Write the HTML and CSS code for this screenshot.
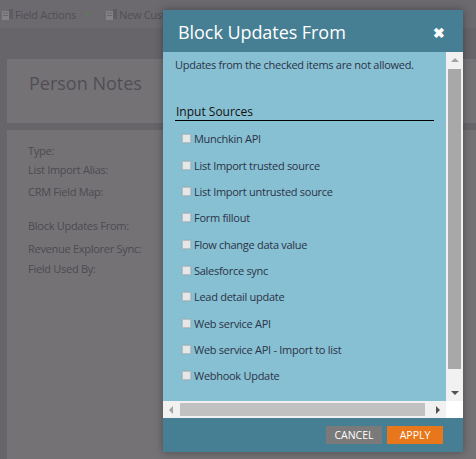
FILE: index.html
```html
<!DOCTYPE html>
<html>
<head>
  <meta charset="UTF-8">
  <title>Block Updates From</title>
  <link rel="stylesheet" href="styles.css">
</head>
<body>
  <div class="toolbar">
    <span class="tool tool-actions">
      <svg class="tool-icon" width="11" height="11" viewBox="0 0 11 11"><path d="M0 2h7v9H0z" fill="#858287"/><path d="M7 0h4v10H7z" fill="#5f5c62"/><path d="M1 4h5M1 6.500h5" stroke="#68656b"/></svg>
      Field Actions
      <span class="tool-arrow"></span>
    </span>
    <span class="tool tool-new">
      <svg class="tool-icon" width="11" height="11" viewBox="0 0 11 11"><path d="M0 2h7v9H0z" fill="#858287"/><path d="M7 0h4v10H7z" fill="#5f5c62"/><path d="M1 4h5M1 6.500h5" stroke="#68656b"/></svg>
      New Custom Field
    </span>
  </div>
  <div class="page">
    <div class="panel panel-title">
      <h2>Person Notes</h2>
    </div>
    <div class="panel panel-fields">
      <div class="field">Type:</div>
      <div class="field field-alias">List Import Alias:</div>
      <div class="field field-crm">CRM Field Map:</div>
      <div class="field field-block">Block Updates From:</div>
      <div class="field field-sync">Revenue Explorer Sync:</div>
      <div class="field field-used">Field Used By:</div>
    </div>
  </div>

  <div class="modal">
    <div class="modal-header">
      <span class="modal-title">Block Updates From</span>
      <span class="modal-close">&#10006;</span>
    </div>
    <div class="modal-body">
      <div class="modal-scroll">
        <div class="modal-content">
          <p class="note">Updates from the checked items are not allowed.</p>
          <div class="section-title">Input Sources</div>
          <label class="option"><span class="box"></span>Munchkin API</label>
          <label class="option"><span class="box"></span>List Import trusted source</label>
          <label class="option"><span class="box"></span>List Import untrusted source</label>
          <label class="option"><span class="box"></span>Form fillout</label>
          <label class="option"><span class="box"></span>Flow change data value</label>
          <label class="option"><span class="box"></span>Salesforce sync</label>
          <label class="option"><span class="box"></span>Lead detail update</label>
          <label class="option"><span class="box"></span>Web service API</label>
          <label class="option"><span class="box"></span>Web service API - Import to list</label>
          <label class="option"><span class="box"></span>Webhook Update</label>
        </div>
        <div class="vbar">
          <span class="arrow arrow-up"></span>
          <span class="vthumb"></span>
          <span class="arrow arrow-down"></span>
        </div>
      </div>
      <div class="hbar">
        <span class="arrow arrow-left"></span>
        <span class="hthumb"></span>
        <span class="arrow arrow-right"></span>
      </div>
    </div>
    <div class="modal-footer">
      <button class="btn btn-cancel">CANCEL</button>
      <button class="btn btn-apply">APPLY</button>
    </div>
  </div>
</body>
</html>
```

FILE: styles.css
```css
html, body {
  margin: 0;
  padding: 0;
}
body {
  width: 476px;
  height: 459px;
  overflow: hidden;
  background-color: #67646a;
  font-family: "Open Sans", sans-serif;
  font-size: 11px;
  letter-spacing: -0.28px;
  color: #4c4a4f;
  position: relative;
}
/* Page behind the overlay */
.toolbar {
  height: 28px;
  padding-left: 2px;
  display: flex;
  align-items: center;
  background-color: #6d6a6f;
  font-size: 11px;
  white-space: nowrap;
  color: #504e54;
}
.tool {
  display: flex;
  align-items: center;
  gap: 2px;
}
.tool-actions {
  width: 104px;
}
.tool-arrow {
  width: 0;
  height: 0;
  margin-left: 6px;
  border-left: 3px solid transparent;
  border-right: 3px solid transparent;
  border-top: 4px solid #5f7a5a;
}
.page {
  padding: 31px 0 0 7px;
}
.panel {
  background-color: #757276;
}
.panel-title {
  height: 64px;
  margin-bottom: 7px;
}
.panel-title h2 {
  margin: 0;
  padding: 12px 0 0 22px;
  font-size: 18px;
  font-weight: 400;
  letter-spacing: 0;
  color: #504e55;
}
.panel-fields {
  height: 329px;
  padding: 13px 0 0 21px;
}
.field {
  line-height: 15px;
}
.field-alias { margin-top: 4px; }
.field-crm { margin-top: 7px; }
.field-block { margin-top: 19px; }
.field-sync { margin-top: 8px; }
.field-used { margin-top: 5px; }

/* Dialog */
.modal {
  position: absolute;
  left: 163px;
  top: 10px;
  width: 300px;
  height: 442px;
  display: flex;
  flex-direction: column;
  box-shadow: 0 0 8px rgba(0, 0, 0, 0.35);
}
.modal-header {
  height: 42px;
  flex: none;
  display: flex;
  align-items: center;
  justify-content: space-between;
  padding: 2px 18px 0 15px;
  box-sizing: border-box;
  background-color: #467e93;
  color: #fff;
}
.modal-title {
  font-size: 18px;
  letter-spacing: -0.06px;
}
.modal-close {
  font-size: 14px;
  font-weight: bold;
}
.modal-body {
  height: 366px;
  flex: none;
  display: flex;
  flex-direction: column;
  background-color: #fff;
}
.modal-scroll {
  height: 349px;
  flex: none;
  display: flex;
}
.modal-content {
  width: 283px;
  flex: none;
  background-color: #88c0d3;
  color: #2a3346;
  box-sizing: border-box;
  padding: 0 12px;
}
.note {
  margin: 0;
  padding-top: 5px;
  line-height: 15px;
}
.section-title {
  margin-top: 28px;
  height: 20px;
  padding-left: 1px;
  line-height: 24px;
  font-size: 12px;
  letter-spacing: 0;
  color: #111;
  border-bottom: 1px solid #000;
  width: 258px;
}
.option {
  display: flex;
  align-items: center;
  height: 26.35px;
  padding-left: 7px;
}
.section-title + .option {
  margin-top: 4.5px;
}
.box {
  width: 7px;
  height: 7px;
  margin-right: 3px;
  border: 1px solid #b5c0c4;
  background-color: #e6e6e6;
  box-shadow: 0 0 1px #8a9aa0;
}
.vbar {
  width: 17px;
  background-color: #f1f1f1;
  position: relative;
  display: flex;
  flex-direction: column;
  align-items: center;
  justify-content: space-between;
  padding: 6px 0;
  box-sizing: border-box;
}
.vthumb {
  position: absolute;
  left: 2px;
  width: 13px;
  top: 17px;
  height: 300px;
  background-color: #a8a8a8;
}
.hbar {
  height: 17px;
  width: 283px;
  background-color: #f1f1f1;
  position: relative;
  display: flex;
  align-items: center;
  justify-content: space-between;
  padding: 0 6px;
  box-sizing: border-box;
}
.hthumb {
  position: absolute;
  left: 17px;
  top: 2px;
  width: 245px;
  height: 13px;
  background-color: #c1c1c1;
}
.arrow {
  width: 0;
  height: 0;
}
.arrow-up {
  border-left: 4px solid transparent;
  border-right: 4px solid transparent;
  border-bottom: 4px solid #a3a3a3;
}
.arrow-down {
  border-left: 4px solid transparent;
  border-right: 4px solid transparent;
  border-top: 4px solid #505050;
}
.arrow-left {
  border-top: 4px solid transparent;
  border-bottom: 4px solid transparent;
  border-right: 4px solid #a3a3a3;
}
.arrow-right {
  border-top: 4px solid transparent;
  border-bottom: 4px solid transparent;
  border-left: 4px solid #505050;
}
.modal-footer {
  flex: 1;
  display: flex;
  align-items: center;
  justify-content: flex-end;
  gap: 5px;
  padding-right: 20px;
  background-color: #467e93;
}
.btn {
  height: 18px;
  width: 56px;
  padding: 0;
  border: none;
  color: #fff;
  font-family: "Open Sans", sans-serif;
  font-size: 10.5px;
  font-weight: 400;
}
.btn-cancel { background-color: #7a7a7a; }
.btn-apply { background-color: #e8761a; }
```
